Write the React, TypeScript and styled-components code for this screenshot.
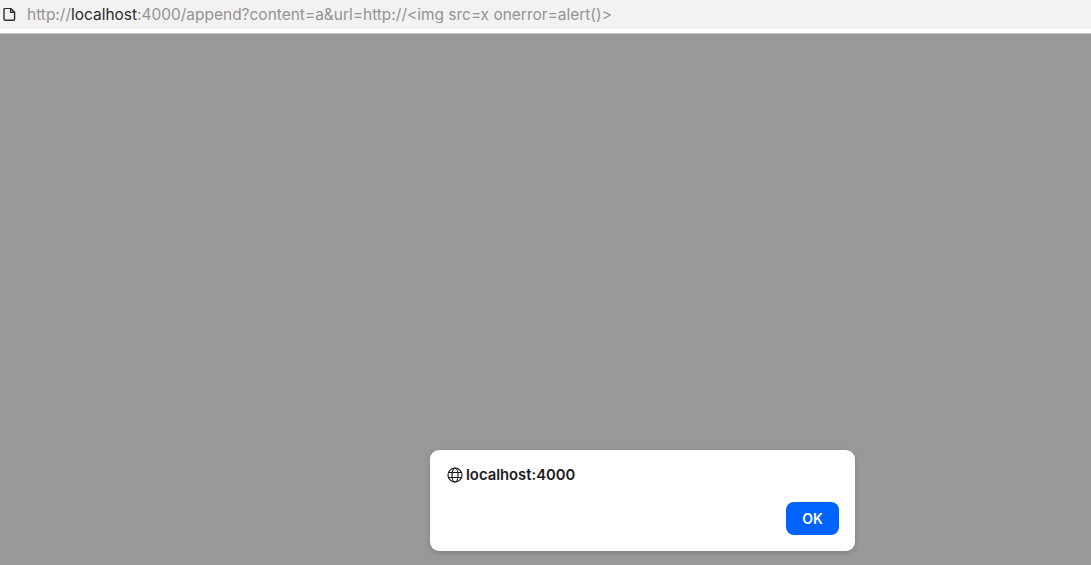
import React from "react";
import styled, { createGlobalStyle } from "styled-components";

const Global = createGlobalStyle`
  html, body { margin: 0; padding: 0; height: 100%; overflow: hidden; background: #fff; }
  #root { height: 100%; }
  * { box-sizing: border-box; }
`;

const Page = styled.div`
  display: flex;
  flex-direction: column;
  height: 565px;
  width: 1091px;
  font-family: Inter, "Liberation Sans", sans-serif;
`;

const AddressBar = styled.div`
  display: flex;
  align-items: center;
  height: 29px;
  padding-left: 3px;
  gap: 10px;
  background: #f2f2f2;
  flex: none;
`;

const Url = styled.div`
  font-size: 15.47px;
  line-height: 29px;
  color: #949494;
  white-space: pre;
`;

const Host = styled.span`
  color: #2a2a2c;
`;

const Spacer = styled.div`
  height: 4px;
  background: #fff;
  flex: none;
`;

const Backdrop = styled.div`
  position: relative;
  flex: 1;
  background: #99999a;
  border-top: 1px solid #c4c4c4;
`;

const Dialog = styled.div`
  position: absolute;
  left: 430px;
  top: 416px;
  width: 425px;
  height: 101px;
  padding: 15px 16px 16px 17px;
  display: flex;
  flex-direction: column;
  justify-content: space-between;
  background: #fff;
  border-radius: 9px;
  box-shadow: 0 2px 6px rgba(0, 0, 0, 0.16);
`;

const Origin = styled.div`
  display: flex;
  align-items: center;
  gap: 3px;
  height: 19px;
  font-size: 14.8px;
  font-weight: 600;
  color: #1c1c1e;
`;

const Actions = styled.div`
  display: flex;
  justify-content: flex-end;
`;

const OkButton = styled.button`
  width: 53px;
  height: 33px;
  border: 0;
  border-radius: 8px;
  background: #0062ff;
  color: #fff;
  font: 600 14px Inter, "Liberation Sans", sans-serif;
`;

const PageIcon = () => (
  <svg width="14" height="14" viewBox="0 0 14 14" fill="none" stroke="#2e2e30" strokeWidth="1.4" strokeLinejoin="round">
    <path d="M1 1.7a1.4 1.4 0 0 1 1.4-1.4h5.2l4 4v6.6a1.4 1.4 0 0 1-1.4 1.4H2.4A1.4 1.4 0 0 1 1 10.9z" />
    <path d="M7.6 .3v4h4" />
  </svg>
);

const GlobeIcon = () => (
  <svg width="16" height="16" viewBox="0 0 16 16" fill="none" stroke="#1c1c1e" strokeWidth="1.2">
    <circle cx="8" cy="8" r="7" />
    <ellipse cx="8" cy="8" rx="3" ry="7" />
    <path d="M1.4 5.5h13.2M1.4 10.5h13.2" />
  </svg>
);

export default function App() {
  return (
    <Page>
      <Global />
      <AddressBar>
        <PageIcon />
        <Url>
          http://<Host>localhost</Host>:4000/append?content=a&amp;url=http://&lt;img src=x onerror=alert()&gt;
        </Url>
      </AddressBar>
      <Spacer />
      <Backdrop>
        <Dialog>
          <Origin>
            <GlobeIcon />
            localhost:4000
          </Origin>
          <Actions>
            <OkButton>OK</OkButton>
          </Actions>
        </Dialog>
      </Backdrop>
    </Page>
  );
}
